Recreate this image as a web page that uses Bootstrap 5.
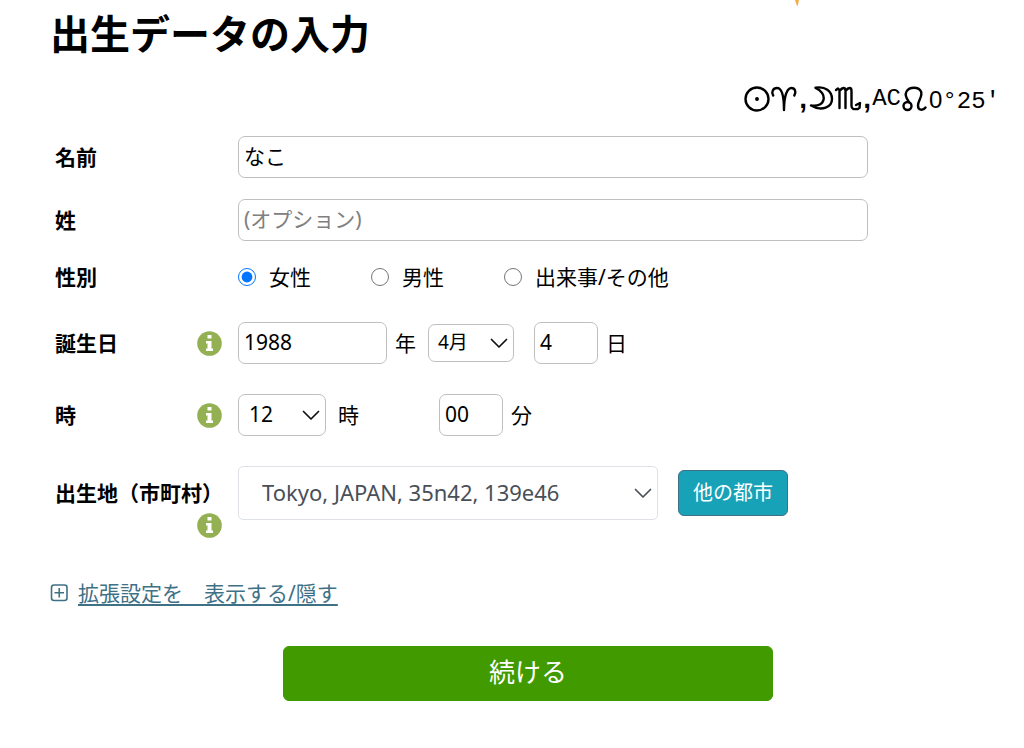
<!DOCTYPE html>
<html lang="ja">
<head>
<meta charset="utf-8">
<meta name="viewport" content="width=device-width, initial-scale=1">
<title>出生データの入力</title>
<link href="https://cdn.jsdelivr.net/npm/bootstrap@5.3.0/dist/css/bootstrap.min.css" rel="stylesheet">
<style>
body{font-family:"Noto Sans","Noto Sans CJK JP",sans-serif;font-size:21px;line-height:30px;color:#000;background:#fff}
h1{font-size:40px;line-height:48px;font-weight:700}
.page-head{padding:10px 0 0 50px}
.flame{margin-right:223px;margin-top:-10px}
.astro{padding-right:24px;height:28px;margin-top:27px;font:24px/28px "Liberation Mono",monospace}
.astro svg{fill:none;stroke:#000;stroke-width:2.4;stroke-linecap:round;stroke-linejoin:round}
.astro .sep{width:10px;text-align:center;font:700 28px/28px "Liberation Sans",sans-serif}
.astro .zero{font-family:"Liberation Sans",sans-serif}
.degree{padding-top:3px}
.birth-form{padding:23px 16px 24px 55px}
.line{display:grid;grid-template-columns:167px minmax(0,630px);column-gap:16px;margin-bottom:30px}
.line-tight{margin-bottom:21px}
.caption{display:flex;flex-wrap:wrap;align-items:center;justify-content:space-between;align-self:center;font-weight:700}
.caption .info{margin-left:auto}
.place .caption{margin-right:-4px;padding-top:12px;row-gap:5px}
.place .info{margin-right:4px}
.info{border:0;padding:0;background:none;display:flex}
.form-control,.form-select{font-size:21px;line-height:30px;color:#000;border:1px solid #bfbfbf;border-radius:7px;background-color:#fff;padding:4px 5px 6px}
.form-control::placeholder{color:#808080;opacity:1}
.form-select{padding-left:10px;background-image:url("data:image/svg+xml,%3Csvg xmlns='http://www.w3.org/2000/svg' viewBox='0 0 20 20'%3E%3Cpath fill='none' stroke='%23111' stroke-width='1.700' stroke-linecap='round' stroke-linejoin='round' d='M2.500 6.500 10 14l7.500-7.500'/%3E%3C/svg%3E");background-size:20px 20px;background-position:right 4px center}
.month{font-size:19px;line-height:26px;width:86px;padding-left:9px}
.city{font-size:22px;line-height:32px;width:420px;color:#495057;border-color:#dee2e6;border-radius:5px;padding:9px 23px 11px;background-image:url("data:image/svg+xml,%3Csvg xmlns='http://www.w3.org/2000/svg' viewBox='0 0 20 20'%3E%3Cpath fill='none' stroke='%23495057' stroke-width='1.700' stroke-linecap='round' stroke-linejoin='round' d='M2.500 6.500 10 14l7.500-7.500'/%3E%3C/svg%3E")}
.w-year{width:149px}.w-two{width:64px}.w-hour{width:88px}
.ms-unit{margin-left:12px}
.ms-day{margin-left:20px}
.ms-minute{margin-left:80px}
.sex{height:30px;gap:60px}
.sex label{gap:13px}
.sex input{width:18px;height:18px;margin:0;accent-color:#0075ff}
.btn-city{font-size:20px;line-height:30px;padding:7px 14px;color:#fff;background:#17a2b8;border:1px solid #3f7186;border-radius:6px}
.city-row{gap:20px}
.more{color:#3f7186}
.more a{color:inherit;text-underline-offset:3px}
.more-row{margin:40px 0 38px -5px}
.btn-go{font-size:26px;line-height:39px;padding:6px 8px 8px;color:#fff;background:#409a00;border:1px solid #409a00;border-radius:6px;width:490px;max-width:100%}
.go-row{margin-left:-7px}
.place{margin-bottom:0}
</style>
</head>
<body>
<header>
  <div class="page-head d-flex justify-content-between align-items-start">
    <h1 class="mb-0">出生データの入力</h1>
    <svg class="flame" width="8" height="7" viewBox="0 0 8 7" aria-hidden="true"><path d="M2 0h4L4.600 6H4z" fill="#f5ad45"/></svg>
  </div>
  <div class="astro d-flex justify-content-end align-items-center">
    <svg width="26" height="26" viewBox="0 0 26 26"><circle cx="13" cy="13" r="11.500"/><circle cx="13" cy="13" r="1.200" fill="#000" stroke-width="1.500"/></svg>
    <svg width="28" height="26" viewBox="0 0 28 26"><path d="M3.200 9.500C1 6 3 2 7 2c5 0 7 8 7 22C14 10 17 2 21.500 2c3.500 0 5 4 2.800 7.500"/></svg>
    <span class="sep">,</span>
    <svg width="26" height="26" viewBox="0 0 26 26"><path d="M7.500 1.800C17 0 24 5 24 13S14 26 3 19.500C18 22 20 7 7.500 1.800Z"/></svg>
    <svg width="28" height="26" viewBox="0 0 28 26"><path d="M2 4l2-1.500L5.500 4v18M5.500 5c3-4 6-4 6 0v17M11.500 5c3-4 6-4 6 0v15c0 3 2 3.500 6.500 3M22 19l4-2-.5 5"/></svg>
    <span class="sep">,</span>
    <span>AC</span>
    <svg width="28" height="26" viewBox="0 0 28 26"><circle cx="6.500" cy="20" r="4"/><path d="M8 16C5 12 3.500 9 5.500 5.500 8.500.5 17.500.5 20 5.500c2 5-3 8.500-3 14 0 5 5 5.500 7.500 2"/></svg>
    <span class="degree"><span class="zero">0</span>°25'</span>
  </div>
</header>
<main>
<form class="birth-form" onsubmit="return false">
  <div class="line line-tight">
    <label class="caption" for="first">名前</label>
    <input class="form-control" id="first" type="text" value="なこ">
  </div>
  <div class="line line-tight">
    <label class="caption" for="last">姓</label>
    <input class="form-control" id="last" type="text" placeholder="(オプション)">
  </div>
  <div class="line" role="radiogroup" aria-labelledby="sexlabel">
    <div class="caption" id="sexlabel">性別</div>
    <div class="sex d-flex align-items-center">
      <label class="d-flex align-items-center"><input type="radio" name="sex" checked>女性</label>
      <label class="d-flex align-items-center"><input type="radio" name="sex">男性</label>
      <label class="d-flex align-items-center"><input type="radio" name="sex">出来事/その他</label>
    </div>
  </div>
  <div class="line">
    <div class="caption"><label for="year">誕生日</label>
      <button class="info" type="button" aria-label="誕生日の説明"><svg width="25" height="25" viewBox="0 0 25 25"><circle cx="12.500" cy="12.500" r="12.300" fill="#93b152"/><path fill="#fff" d="M10.500 4h4v3.500h-4zM9 10h5.500v7.500H16V20H9v-2.500h1.500v-5H9z"/></svg></button>
    </div>
    <div class="d-flex align-items-center">
      <input class="form-control w-year" id="year" type="text" value="1988">
      <label class="ms-2" for="year">年</label>
      <select class="form-select month ms-unit" aria-label="月"><option>4月</option></select>
      <input class="form-control w-two ms-day" id="day" type="text" value="4">
      <label class="ms-2" for="day">日</label>
    </div>
  </div>
  <div class="line">
    <div class="caption"><label for="hour">時</label>
      <button class="info" type="button" aria-label="時の説明"><svg width="25" height="25" viewBox="0 0 25 25"><circle cx="12.500" cy="12.500" r="12.300" fill="#93b152"/><path fill="#fff" d="M10.500 4h4v3.500h-4zM9 10h5.500v7.500H16V20H9v-2.500h1.500v-5H9z"/></svg></button>
    </div>
    <div class="d-flex align-items-center">
      <select class="form-select w-hour" id="hour"><option>12</option></select>
      <label class="ms-unit" for="hour">時</label>
      <input class="form-control w-two ms-minute" id="minute" type="text" value="00">
      <label class="ms-2" for="minute">分</label>
    </div>
  </div>
  <div class="line place">
    <div class="caption"><label for="city">出生地（市町村）</label>
      <button class="info" type="button" aria-label="出生地の説明"><svg width="25" height="25" viewBox="0 0 25 25"><circle cx="12.500" cy="12.500" r="12.300" fill="#93b152"/><path fill="#fff" d="M10.500 4h4v3.500h-4zM9 10h5.500v7.500H16V20H9v-2.500h1.500v-5H9z"/></svg></button>
    </div>
    <div class="city-row d-flex align-items-center align-self-start">
      <select class="form-select city" id="city"><option>Tokyo, JAPAN, 35n42, 139e46</option></select>
      <button class="btn btn-city text-nowrap" type="button">他の都市</button>
    </div>
  </div>
  <div class="more more-row d-flex align-items-center gap-2">
    <svg width="20" height="20" viewBox="0 0 20 20" fill="none" stroke="currentColor" stroke-width="1.600"><rect x="1.500" y="2" width="15.500" height="15.500" rx="2.500"/><path d="M9.250 5v9.500M4.500 9.750H14"/></svg>
    <a href="#">拡張設定を　表示する/隠す</a>
  </div>
  <div class="go-row text-center"><button class="btn btn-go" type="submit">続ける</button></div>
</form>
</main>
<script src="https://cdn.jsdelivr.net/npm/bootstrap@5.3.0/dist/js/bootstrap.bundle.min.js"></script>
</body>
</html>
